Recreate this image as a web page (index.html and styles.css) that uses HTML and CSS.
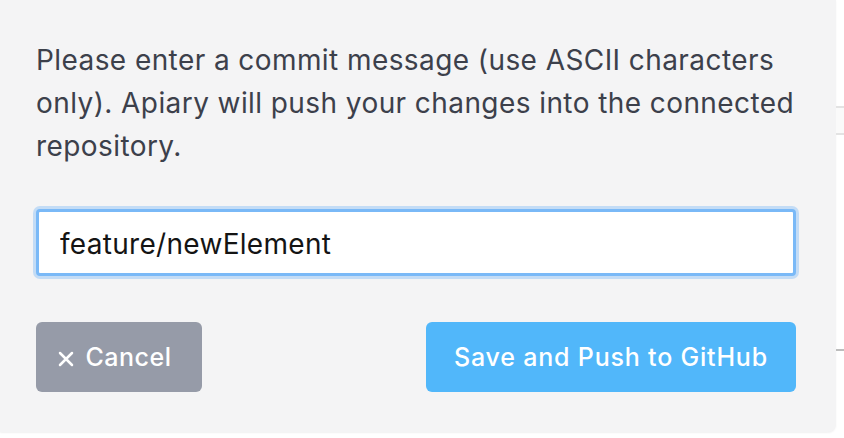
FILE: index.html
```html
<!DOCTYPE html>
<html lang="en">
<head>
<meta charset="utf-8">
<title>Commit message</title>
<link rel="stylesheet" href="styles.css">
</head>
<body>
<div class="page">
  <div class="dialog">
    <p class="msg">Please enter a commit message (use ASCII characters only). Apiary will push your changes into the connected repository.</p>
    <input class="field" type="text" value="feature/newElement">
    <div class="actions">
      <button class="btn btn-cancel"><svg class="x-icon" viewBox="0 0 16 16" width="16" height="16"><path d="M2 2 L14 14 M14 2 L2 14" stroke="#fff" stroke-width="2.5" stroke-linecap="round" fill="none"/></svg><span>Cancel</span></button>
      <button class="btn btn-primary">Save and Push to GitHub</button>
    </div>
  </div>
  <div class="side">
    <div class="side-row"></div>
    <div class="side-line"></div>
  </div>
</div>
</body>
</html>
```
FILE: styles.css
```css
html, body {
  margin: 0;
  padding: 0;
  background: #ffffff;
}
body {
  width: 844px;
  height: 438px;
  overflow: hidden;
}
.page {
  display: flex;
  height: 438px;
}
.dialog {
  width: 836px;
  height: 432px;
  flex: none;
  box-sizing: border-box;
  background: #f4f4f5;
  border-bottom-right-radius: 8px;
  padding: 39px 40px 0 36px;
  box-shadow: 0 1px 2px rgba(0, 0, 0, 0.06);
}
.msg {
  margin: 0 -8px 0 0;
  font-family: Inter, "Liberation Sans", sans-serif;
  font-size: 28px;
  line-height: 43px;
  letter-spacing: 0.42px;
  color: #3c404b;
}
.field {
  display: block;
  width: 100%;
  box-sizing: border-box;
  height: 67px;
  margin: 41px 0 0 0;
  border: 3px solid #7ab9f7;
  border-radius: 4px;
  box-shadow: 0 0 0 3px rgba(122, 185, 247, 0.4);
  padding: 3px 21px 0 21px;
  font-family: Inter, "Liberation Sans", sans-serif;
  font-size: 28px;
  letter-spacing: 0.3px;
  color: #141414;
  background: #ffffff;
  outline: none;
}
.actions {
  display: flex;
  justify-content: space-between;
  margin-top: 46px;
}
.btn {
  height: 70px;
  border: 0;
  border-radius: 6px;
  color: #ffffff;
  font-family: Inter, "Liberation Sans", sans-serif;
  font-weight: 500;
  font-size: 25px;
  letter-spacing: 0.8px;
  display: flex;
  align-items: center;
  justify-content: center;
  cursor: pointer;
}
.btn-cancel {
  width: 166px;
  padding: 0 9px 0 0;
  background: #969ba8;
  gap: 12px;
  letter-spacing: 0.5px;
}
.x-icon {
  display: block;
  margin-top: 3px;
}
.btn-primary {
  width: 370px;
  background: #51b7fa;
}
.side {
  flex: 1;
  display: flex;
  flex-direction: column;
}
.side-row {
  margin-top: 106px;
  height: 25px;
  border-top: 2px solid #e3e3e3;
  border-bottom: 2px solid #e3e3e3;
  background: #fafafa;
}
.side-line {
  margin-top: 214px;
  height: 2px;
  background: #bdbdbd;
}
```
